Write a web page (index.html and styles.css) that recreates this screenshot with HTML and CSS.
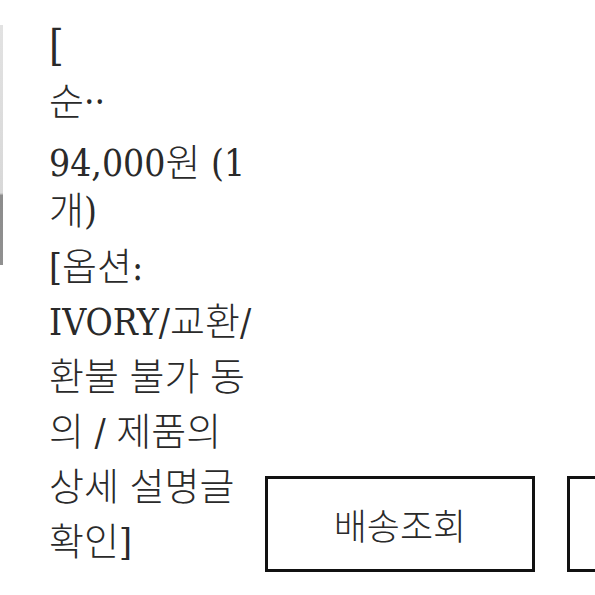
FILE: index.html
```html
<!DOCTYPE html>
<html lang="ko">
<head>
<meta charset="utf-8">
<link rel="stylesheet" href="styles.css">
</head>
<body>
<div class="order-row">
  <div class="thumb"></div>
  <div class="info">
    <div class="name"><span class="bracket">[</span><br><span class="ko">순</span>··</div>
    <div class="price">94,000<span class="ko">원</span> (1<span class="ko">개</span>)</div>
    <div class="option">[<span class="ko">옵션</span>: IVORY/<span class="ko">교환</span>/<span class="ko">환불 불가 동의</span> / <span class="ko">제품의 상세 설명글 확인</span>]</div>
  </div>
  <div class="actions">
    <button class="btn">배송조회</button>
    <button class="btn">구매확정</button>
  </div>
</div>
</body>
</html>
```
FILE: styles.css
```css
html, body {
  margin: 0;
  padding: 0;
  background: #fff;
  overflow: hidden;
}
.order-row {
  display: flex;
  align-items: flex-start;
  width: 595px;
  height: 595px;
}
.thumb {
  flex: none;
  width: 3px;
  height: 240px;
  margin-top: 25px;
  background: linear-gradient(to bottom, #e2e2e2 0%, #d8d8d8 70%, #8c8c8c 71%, #909090 100%);
}
.info {
  flex: none;
  width: 213px;
  margin-left: 46px;
  padding-top: 20px;
  font-family: "DejaVu Serif Condensed", "DejaVu Serif", "Noto Sans CJK KR", serif;
  font-stretch: semi-condensed;
  font-size: 37px;
  color: #2a2a2a;
}
.ko {
  font-family: "Noto Sans CJK KR", sans-serif;
  font-stretch: normal;
  font-size: 38px;
  font-weight: 300;
  line-height: 0;
}
.bracket {
  font-size: 42px;
  line-height: 0;
}
.name {
  line-height: 55px;
}
.price {
  line-height: 48px;
  margin-top: 10px;
}
.option {
  line-height: 55px;
  margin-top: 4px;
}
.actions {
  flex: none;
  display: flex;
  gap: 32px;
  align-self: flex-start;
  margin-top: 476px;
  margin-left: 3px;
}
.btn {
  flex: none;
  width: 270px;
  height: 96px;
  border: 3px solid #111;
  background: #fff;
  font-family: "Noto Sans CJK KR", sans-serif;
  font-size: 36px;
  font-weight: 300;
  color: #2a2a2a;
  padding: 0;
}
```
